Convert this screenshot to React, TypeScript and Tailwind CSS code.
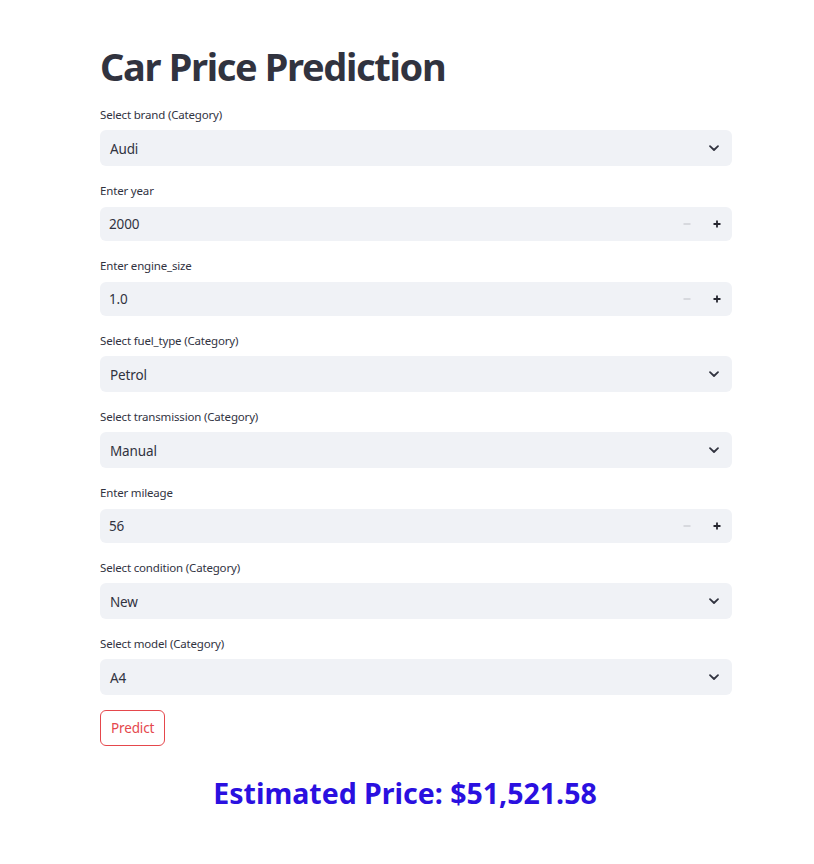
import React from "react";

const font = { fontFamily: '"Noto Sans", "Open Sans", sans-serif' };

function Chevron() {
  return (
    <svg width="12" height="12" viewBox="0 0 12 12" fill="none">
      <path d="M2 4.2 L6 8 L10 4.2" stroke="#31333F" strokeWidth="1.8" strokeLinecap="round" strokeLinejoin="round" />
    </svg>
  );
}

function SelectField({ label, value }: { label: string; value: string }) {
  return (
    <div className="flex flex-col">
      <div className="h-4 mb-[7px] text-[11.5px] leading-4 tracking-[-0.015em] text-[#31333F]">{label}</div>
      <div className="h-9 rounded-md bg-[#F0F2F6] flex items-center justify-between pl-[10px] pr-[12px]">
        <span className="text-[13.5px] leading-9 tracking-[-0.01em] text-[#31333F] pt-px">{value}</span>
        <Chevron />
      </div>
    </div>
  );
}

function NumberField({ label, value }: { label: string; value: string }) {
  return (
    <div className="flex flex-col">
      <div className="h-4 mb-2 text-[11.5px] leading-4 tracking-[-0.015em] text-[#31333F]">{label}</div>
      <div className="h-[34px] rounded-md bg-[#F0F2F6] flex items-center justify-between pl-[2px] pr-[10px]">
        <span className="text-[13.5px] tracking-[-0.01em] text-[#31333F] pl-[7px]">{value}</span>
        <div className="flex items-center gap-[20px]">
          <svg width="10" height="10" viewBox="0 0 10 10">
            <path d="M1.5 5 H8.5" stroke="#C9CBD1" strokeWidth="1.3" />
          </svg>
          <svg width="10" height="10" viewBox="0 0 10 10">
            <path d="M1.5 5 H8.5 M5 1.5 V8.5" stroke="#262730" strokeWidth="1.8" />
          </svg>
        </div>
      </div>
    </div>
  );
}

export default function App() {
  return (
    <div className="w-[814px] min-h-[864px] bg-white" style={font}>
      <div className="w-[632px] ml-[100px] pt-[40px]">
        <h1 className="text-[38px] leading-[52px] font-bold text-[#31333F] tracking-[-0.035em] mb-[15px]">
          Car Price Prediction
        </h1>
        <div className="flex flex-col gap-[17px]">
          <SelectField label="Select brand (Category)" value="Audi" />
          <NumberField label="Enter year" value="2000" />
          <NumberField label="Enter engine_size" value="1.0" />
          <SelectField label="Select fuel_type (Category)" value="Petrol" />
          <SelectField label="Select transmission (Category)" value="Manual" />
          <NumberField label="Enter mileage" value="56" />
          <SelectField label="Select condition (Category)" value="New" />
          <SelectField label="Select model (Category)" value="A4" />
        </div>
        <button className="mt-[15px] h-9 px-[10px] rounded-md border border-[#E5474C] text-[#E5474C] text-[13.5px] tracking-[-0.01em] bg-white">
          Predict
        </button>
      </div>
      <div className="w-full flex justify-center mt-[27px] pr-[4px]">
        <div className="text-[28.5px] leading-[40px] font-bold text-[#2A10E0]">Estimated Price: $51,521.58</div>
      </div>
    </div>
  );
}
